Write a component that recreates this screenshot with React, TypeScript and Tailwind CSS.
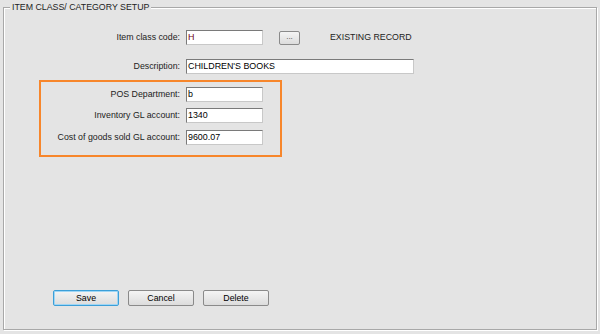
import React from 'react';

const font = { fontFamily: '"Liberation Sans", Arial, sans-serif' };

function Field({ value, width = 'w-[77px]', color = 'text-black' }: { value: string; width?: string; color?: string }) {
  return (
    <div
      className={`${width} h-[15px] bg-white border border-t-[#7a7a7a] border-l-[#7a7a7a] border-r-[#c8c8c8] border-b-[#c8c8c8] px-[1px] text-[8.9px] leading-[13px] ${color}`}
    >
      {value}
    </div>
  );
}

function Row({ label, labelWidth, children }: { label: string; labelWidth: string; children: React.ReactNode }) {
  return (
    <div className="flex items-center h-[15px]">
      <div className={`${labelWidth} text-right text-[8.8px] text-[#222] pr-[6px] leading-[13px] whitespace-nowrap`}>{label}</div>
      {children}
    </div>
  );
}

function Btn({ label, focused = false }: { label: string; focused?: boolean }) {
  return (
    <button
      className={`w-[66px] h-[16px] rounded-[2px] border text-[8.8px] leading-[13px] text-black bg-gradient-to-b from-[#f4f4f4] to-[#dcdcdc] ${
        focused ? 'border-[#3c9fd8] shadow-[inset_0_0_0_1px_#9fd6f5]' : 'border-[#8a8a8a]'
      }`}
    >
      {label}
    </button>
  );
}

export default function App() {
  return (
    <div className="w-[600px] h-[334px] bg-[#e4e4e4] px-[3px] pt-[7px]" style={font}>
      <div className="relative h-[323px] border border-[#a8a8a8] shadow-[inset_1px_1px_0_#fff,1px_1px_0_#fff]">
        <div className="absolute left-[6px] top-[-7px] px-[2px] bg-[#e4e4e4] text-[8.8px] leading-[13px] text-[#222]">
          ITEM CLASS/ CATEGORY SETUP
        </div>

        <div className="pt-[22px]">
          <Row label="Item class code:" labelWidth="w-[182px]">
            <Field value="H" color="text-[#6b0020]" />
            <div className="ml-[16px] w-[21px] h-[14px] rounded-[2px] border border-[#8a8a8a] bg-gradient-to-b from-[#f4f4f4] to-[#dcdcdc] text-[8px] leading-[9px] text-center text-[#444]">
              ...
            </div>
            <div className="ml-[30px] text-[8.8px] text-[#222] leading-[13px]">EXISTING RECORD</div>
          </Row>

          <div className="mt-[14px]">
            <Row label="Description:" labelWidth="w-[182px]">
              <Field value="CHILDREN'S BOOKS" width="w-[228px]" />
            </Row>
          </div>

          <div className="ml-[35px] mt-[6px] w-[243px] h-[77px] border-2 border-[#f7862b] pt-[5px] flex flex-col gap-[6px]">
            <Row label="POS Department:" labelWidth="w-[145px]">
              <Field value="b" />
            </Row>
            <Row label="Inventory GL account:" labelWidth="w-[145px]">
              <Field value="1340" />
            </Row>
            <div className="mt-[1px]">
              <Row label="Cost of goods sold GL account:" labelWidth="w-[145px]">
                <Field value="9600.07" />
              </Row>
            </div>
          </div>

          <div className="ml-[49px] mt-[133px] flex gap-[9px]">
            <Btn label="Save" focused />
            <Btn label="Cancel" />
            <Btn label="Delete" />
          </div>
        </div>
      </div>
    </div>
  );
}
